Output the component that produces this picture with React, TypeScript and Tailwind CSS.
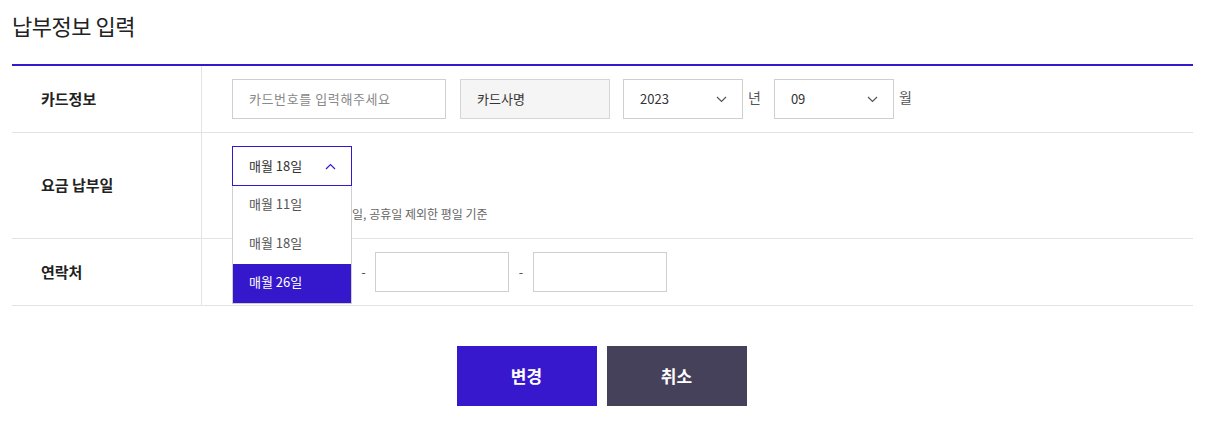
import React from 'react';

const font = { fontFamily: '"Noto Sans CJK KR", "Noto Sans", sans-serif' };

function Chevron({ up = false, color = '#555' }: { up?: boolean; color?: string }) {
  return (
    <svg width="11" height="7" viewBox="0 0 11 7" fill="none">
      <polyline
        points={up ? '1,6 5.5,1.5 10,6' : '1,1 5.5,5.5 10,1'}
        stroke={color}
        strokeWidth="1.2"
      />
    </svg>
  );
}

function Select({ value, className = '' }: { value: string; className?: string }) {
  return (
    <div
      className={`flex h-[40px] w-[120px] items-center justify-between border border-[#cfcfcf] bg-white pl-4 pr-[15px] text-[13px] text-[#333] ${className}`}
    >
      <span>{value}</span>
      <Chevron />
    </div>
  );
}

export default function App() {
  const days = ['매월 11일', '매월 18일', '매월 26일'];

  return (
    <div className="min-h-[426px] w-[1205px] bg-white px-3" style={font}>
      <h2 className="pt-[9px] pb-[23px] text-[22px] leading-[32px] text-[#222] tracking-[-0.5px]">
        납부정보 입력
      </h2>

      <div className="border-t-2 border-[#3518cc]">
        {/* 카드정보 */}
        <div className="grid grid-cols-[190px_1fr] border-b border-[#e3e3e3]">
          <div className="flex items-center border-r border-[#e3e3e3] pl-[29px] text-[15px] font-bold text-[#222]">
            카드정보
          </div>
          <div className="flex items-center py-[13px] pl-[30px] text-[13px]">
            <div className="flex h-[40px] w-[214px] items-center border border-[#cfcfcf] px-4 tracking-[0.6px] text-[#888]">
              카드번호를 입력해주세요
            </div>
            <div className="ml-[14px] flex h-[40px] w-[150px] items-center border border-[#d5d5d5] bg-[#f5f5f5] px-4 text-[#333]">
              카드사명
            </div>
            <Select value="2023" className="ml-[13px]" />
            <span className="ml-[5px] self-start pt-[8px] text-[14px] text-[#555]">년</span>
            <Select value="09" className="ml-[13px]" />
            <span className="ml-[5px] self-start pt-[8px] text-[14px] text-[#555]">월</span>
          </div>
        </div>

        {/* 요금 납부일 */}
        <div className="relative z-10 grid grid-cols-[190px_1fr] border-b border-[#e3e3e3]">
          <div className="flex items-center border-r border-[#e3e3e3] pl-[29px] text-[15px] font-bold text-[#222]">
            요금 납부일
          </div>
          <div className="h-[105px] pt-[13px] pl-[30px]">
            <div className="relative w-[120px]">
              <div className="flex h-[40px] w-[120px] items-center justify-between border border-[#3518cc] bg-white pl-4 pr-[15px] text-[13px] text-[#333]">
                <span>매월 18일</span>
                <Chevron up color="#3518cc" />
              </div>
              <ul className="absolute left-0 top-[40px] w-[120px] border border-t-0 border-[#cfcfcf] bg-white text-[13px]">
                {days.map((d, i) => (
                  <li
                    key={d}
                    className={`flex h-[39px] items-center pb-[3px] pl-4 ${
                      i === 2 ? 'bg-[#3518cc] text-white' : 'text-[#555]'
                    }`}
                  >
                    {d}
                  </li>
                ))}
              </ul>
            </div>
            <p className="mt-[19px] text-[12px] leading-[18px] text-[#666]">
              ※출금일은 토요일, 일요일, 공휴일 제외한 평일 기준
            </p>
          </div>
        </div>

        {/* 연락처 */}
        <div className="grid grid-cols-[190px_1fr] border-b border-[#e3e3e3]">
          <div className="flex items-center border-r border-[#e3e3e3] pl-[29px] text-[15px] font-bold text-[#222]">
            연락처
          </div>
          <div className="flex items-center py-[13px] pl-[30px] text-[13px] text-[#555]">
            <div className="h-[40px] w-[120px] border border-[#cfcfcf]" />
            <span className="w-[23px] text-center">-</span>
            <div className="h-[40px] w-[134px] border border-[#cfcfcf]" />
            <span className="w-[24px] text-center">-</span>
            <div className="h-[40px] w-[134px] border border-[#cfcfcf]" />
          </div>
        </div>
      </div>

      <div className="mt-[40px] flex justify-center gap-[10px] pr-[2px]">
        <button className="h-[60px] w-[140px] bg-[#3718cc] text-[17px] font-bold text-white">
          변경
        </button>
        <button className="h-[60px] w-[140px] bg-[#45415a] text-[17px] font-bold text-white">
          취소
        </button>
      </div>
    </div>
  );
}
